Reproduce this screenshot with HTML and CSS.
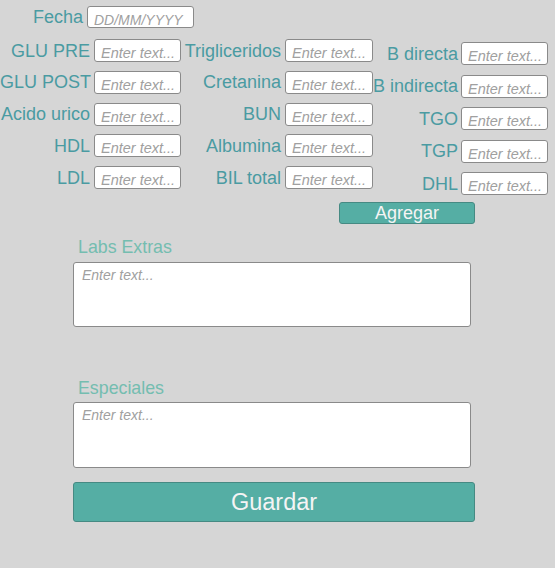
FILE: index.html
```html
<!DOCTYPE html>
<html lang="es">
<head>
<meta charset="utf-8">
<title>Labs</title>
<link rel="stylesheet" href="styles.css">
</head>
<body>
<div class="page">
  <div class="fecha-row">
    <label class="label fecha-label">Fecha</label>
    <input class="field fecha-input" placeholder="DD/MM/YYYY">
  </div>

  <div class="grid">
    <div class="col col1">
      <div class="row"><span class="label">GLU PRE</span><input class="field" placeholder="Enter text..."></div>
      <div class="row"><span class="label">GLU POST</span><input class="field" placeholder="Enter text..."></div>
      <div class="row"><span class="label">Acido urico</span><input class="field" placeholder="Enter text..."></div>
      <div class="row"><span class="label">HDL</span><input class="field" placeholder="Enter text..."></div>
      <div class="row"><span class="label">LDL</span><input class="field" placeholder="Enter text..."></div>
    </div>
    <div class="col col2">
      <div class="row"><span class="label">Trigliceridos</span><input class="field" placeholder="Enter text..."></div>
      <div class="row"><span class="label">Cretanina</span><input class="field" placeholder="Enter text..."></div>
      <div class="row"><span class="label">BUN</span><input class="field" placeholder="Enter text..."></div>
      <div class="row"><span class="label">Albumina</span><input class="field" placeholder="Enter text..."></div>
      <div class="row"><span class="label">BIL total</span><input class="field" placeholder="Enter text..."></div>
    </div>
    <div class="col col3">
      <div class="row"><span class="label">B directa</span><input class="field" placeholder="Enter text..."></div>
      <div class="row"><span class="label">B indirecta</span><input class="field" placeholder="Enter text..."></div>
      <div class="row"><span class="label">TGO</span><input class="field" placeholder="Enter text..."></div>
      <div class="row"><span class="label">TGP</span><input class="field" placeholder="Enter text..."></div>
      <div class="row"><span class="label">DHL</span><input class="field" placeholder="Enter text..."></div>
    </div>
  </div>

  <div class="actions">
    <button class="btn btn-add">Agregar</button>
  </div>

  <div class="block block-extras">
    <div class="block-label">Labs Extras</div>
    <textarea class="area area-extras" placeholder="Enter text..."></textarea>
  </div>

  <div class="block block-especiales">
    <div class="block-label">Especiales</div>
    <textarea class="area area-especiales" placeholder="Enter text..."></textarea>
  </div>

  <button class="btn btn-save">Guardar</button>
</div>
</body>
</html>
```

FILE: styles.css
```css
* {
  box-sizing: border-box;
}

html, body {
  margin: 0;
  padding: 0;
}

body {
  width: 555px;
  height: 568px;
  overflow: hidden;
  background: #d6d6d6;
  font-family: "Liberation Sans", Arial, sans-serif;
}

.page {
  padding-top: 6px;
}

.label {
  flex-shrink: 0;
  font-size: 18px;
  color: #4a9ba2;
  text-align: right;
  white-space: nowrap;
  line-height: 20px;
}

.field {
  flex-shrink: 0;
  height: 23px;
  width: 87px;
  margin: 0;
  padding: 5px 0 0 6px;
  border: 1px solid #8a8a8a;
  border-radius: 3px;
  background: #ffffff;
  font-family: "Liberation Sans", Arial, sans-serif;
  font-size: 14.5px;
  color: #333;
  outline: none;
}

.field::placeholder,
.area::placeholder {
  color: #a0a0a0;
  font-style: italic;
  opacity: 1;
}

.fecha-row {
  display: flex;
  align-items: center;
  gap: 4px;
  height: 22px;
}

.fecha-label {
  width: 83px;
}

.fecha-input {
  width: 107px;
  height: 22px;
  font-size: 14px;
}

.grid {
  display: flex;
  margin-top: 11px;
}

.col {
  display: flex;
  flex-direction: column;
  gap: 8.75px;
}

.row {
  display: flex;
  align-items: center;
  height: 23px;
}

.col1 .row {
  gap: 4px;
}

.col1 .label {
  width: 90px;
}

.col2 .row {
  gap: 4px;
}

.col2 .label {
  width: 100px;
}

.col2 .field {
  width: 88px;
}

.col3 {
  padding-top: 3px;
  gap: 9.5px;
}

.col3 .row {
  gap: 3px;
}

.col3 .label {
  width: 85px;
}

.actions {
  display: flex;
  justify-content: flex-end;
  padding-right: 80px;
  margin-top: 7px;
}

.btn {
  margin: 0;
  padding: 0;
  border: 1px solid #468a83;
  border-radius: 3px;
  background: #55aea4;
  color: #f4f4f4;
  font-family: "Liberation Sans", Arial, sans-serif;
  cursor: pointer;
}

.btn-add {
  width: 136px;
  height: 22px;
  font-size: 18px;
  line-height: 20px;
}

.block {
  margin-left: 73px;
  width: 398px;
}

.block-extras {
  margin-top: 13px;
}

.block-especiales {
  margin-top: 51px;
}

.block-label {
  padding-left: 5px;
  font-size: 17.8px;
  line-height: 20px;
  color: #74bdb0;
}

.area {
  display: block;
  width: 398px;
  margin: 5px 0 0 0;
  padding: 4px 8px;
  border: 1px solid #8a8a8a;
  border-radius: 3px;
  background: #ffffff;
  font-family: "Liberation Sans", Arial, sans-serif;
  font-size: 14px;
  line-height: 16px;
  resize: none;
  outline: none;
}

.area-extras {
  height: 65px;
}

.area-especiales {
  margin-top: 4px;
  height: 66px;
}

.btn-save {
  display: block;
  margin: 14px 0 0 73px;
  width: 402px;
  height: 40px;
  font-size: 23.5px;
}
```
